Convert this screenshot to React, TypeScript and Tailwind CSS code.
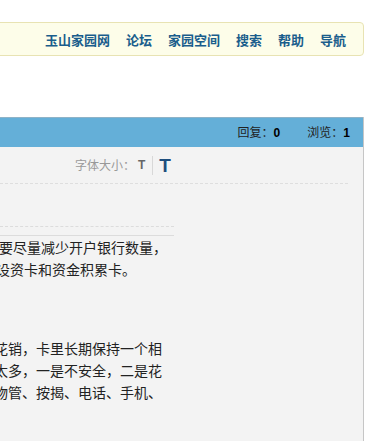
const navItems = ["玉山家园网", "论坛", "家园空间", "搜索", "帮助", "导航"]

const App = () => {
    return (
        <div className="w-[377px] h-[441px] overflow-hidden bg-white font-['Noto_Sans_CJK_SC',sans-serif]">
            {/* TOP NAV */}
            <div className="mt-[22px] -ml-[6px] w-[370px] h-[34px] rounded-[4px] border border-[#e8e3b3] bg-[#fdfde9] flex items-center justify-end gap-[16px] pr-[17px]">
                {navItems.map((item) => (
                    <a key={item} className="text-[13px] font-bold text-[#1a5d8c] leading-none">
                        {item}
                    </a>
                ))}
            </div>

            {/* POST BOX */}
            <div className="mt-[61px] w-[364px] h-[400px] border-r border-[#c6c6c6] flex flex-col">
                <div className="h-[30px] shrink-0 bg-[#64afd8] border-t border-[#8fb3c7] flex items-center justify-end gap-[27px] pr-[13px] text-[12px] text-[#222]">
                    <span>
                        回复：<b className="font-['Liberation_Sans',sans-serif] text-black">0</b>
                    </span>
                    <span>
                        浏览：<b className="font-['Liberation_Sans',sans-serif] text-black">1</b>
                    </span>
                </div>

                <div className="flex-1 bg-[#f3f3f3]">
                    {/* FONT SIZE */}
                    <div className="h-[37px] mr-[15px] border-b border-dashed border-[#dedede] flex items-center pl-[75px]">
                        <span className="text-[12px] text-[#999]">字体大小：</span>
                        <span className="ml-[3px] text-[12px] font-bold text-[#666] font-['Liberation_Sans',sans-serif]">T</span>
                        <span className="ml-[7px] w-px h-[19px] bg-[#d8d8d8]" />
                        <span className="ml-[6px] text-[19px] font-bold text-[#1e4e7e] font-['Liberation_Sans',sans-serif] leading-none">T</span>
                    </div>

                    {/* CONTENT */}
                    <div className="mt-[42px] w-[174px] border-t border-dashed border-[#dcdcdc]" />
                    <div className="mt-[8px] w-[174px] border-t border-[#dcdcdc]" />
                    <div className="text-[14px] leading-[22px] text-[#222] whitespace-nowrap">
                        <p className="-ml-[1px]">要尽量减少开户银行数量，</p>
                        <p className="-ml-[4px]">设资卡和资金积累卡。</p>
                    </div>
                    <div className="mt-[57px] text-[14px] leading-[22px] text-[#222] whitespace-nowrap -ml-[6px]">
                        <p>花销，卡里长期保持一个相</p>
                        <p>太多，一是不安全，二是花</p>
                        <p>物管、按揭、电话、手机、</p>
                    </div>
                </div>
            </div>
        </div>
    )
}

export default App
